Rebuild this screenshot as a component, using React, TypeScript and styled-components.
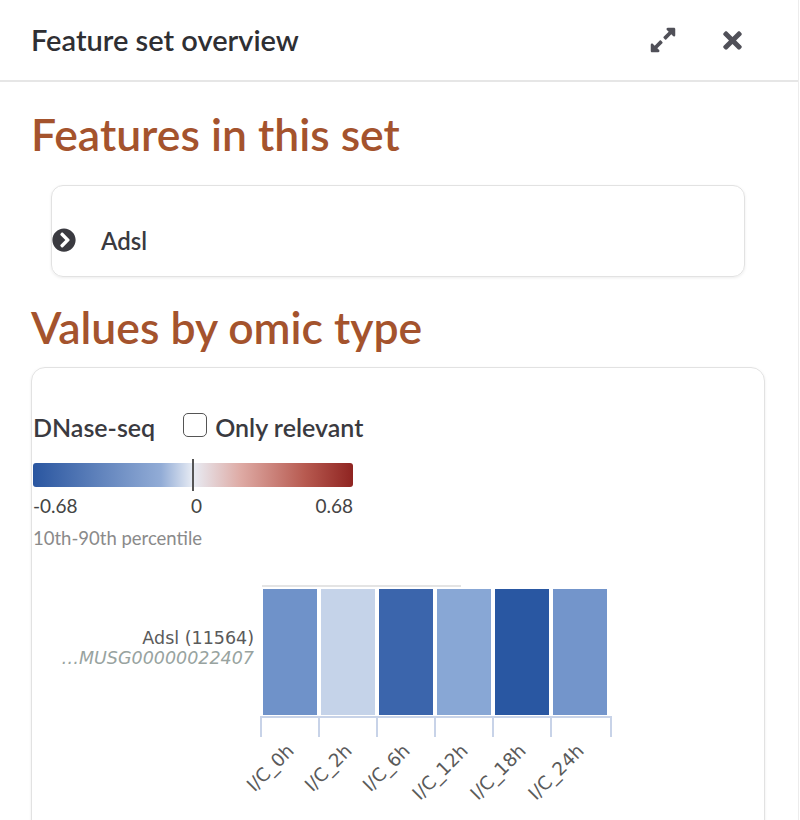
import React from 'react';
import styled, { createGlobalStyle } from 'styled-components';
import { FaExpandAlt, FaTimes, FaChevronCircleRight } from 'react-icons/fa';

const GlobalStyle = createGlobalStyle`
  body {
    margin: 0;
    background: #fff;
    font-family: Lato, "Open Sans", sans-serif;
    color: #3a3a40;
  }
`;

const chartFont = '"DejaVu Sans", Verdana, sans-serif';

const conditions = [
    { label: 'I/C_0h', color: '#6f92c9' },
    { label: 'I/C_2h', color: '#c5d3e9' },
    { label: 'I/C_6h', color: '#3b65ac' },
    { label: 'I/C_12h', color: '#88a7d5' },
    { label: 'I/C_18h', color: '#2957a2' },
    { label: 'I/C_24h', color: '#7395cb' },
];

const Panel = styled.div`
  width: 798px;
  height: 820px;
  border-right: 1px solid #ececec;
  overflow: hidden;
`;

const Header = styled.div`
  height: 80px;
  display: flex;
  align-items: center;
  padding-left: 31px;
  padding-right: 52px;
  border-bottom: 2px solid #e6e6e6;
`;

const HeaderTitle = styled.div`
  flex: 1;
  font-size: 29px;
  line-height: 1;
  font-weight: 600;
  color: #2f2f33;
  margin-top: -2px;
`;

const HeaderButton = styled.button`
  border: none;
  background: none;
  padding: 0;
  margin-left: 42px;
  color: #505058;
  display: flex;
  align-items: center;
  cursor: pointer;
`;

const Content = styled.div`
  padding: 26px 33px 0 31px;
`;

const SectionTitle = styled.h2`
  margin: 0;
  font-size: 44.5px;
  font-weight: 600;
  color: #a4532d;
  line-height: 52px;
`;

const FeatureCard = styled.div`
  margin: 25px 20px 24px;
  height: 92px;
  border: 1px solid #e2e2e2;
  border-radius: 12px;
  box-shadow: 0 1px 3px rgba(0, 0, 0, 0.08);
  display: flex;
  align-items: center;
  padding-top: 18px;
  box-sizing: border-box;
`;

const FeatureRow = styled.div`
  display: flex;
  align-items: center;
  gap: 25px;
  font-size: 24px;
  font-weight: 600;
  color: #3a3a40;
  svg {
    color: #3a3a40;
  }
`;

const OmicCard = styled.div`
  margin-top: 14px;
  height: 480px;
  border: 1px solid #e2e2e2;
  border-radius: 14px;
  box-shadow: 0 1px 3px rgba(0, 0, 0, 0.08);
  padding: 44px 0 0 1px;
`;

const OmicHeader = styled.div`
  display: flex;
  align-items: center;
  gap: 28px;
  font-size: 25px;
  line-height: 30px;
  font-weight: 600;
  color: #3a3a40;
`;

const CheckLabel = styled.label`
  display: flex;
  align-items: center;
  gap: 8px;
`;

const CheckBox = styled.span`
  width: 22px;
  height: 22px;
  border: 1.5px solid #555;
  border-radius: 5px;
  margin-top: -5px;
`;

const Legend = styled.div`
  width: 320px;
  margin-top: 21px;
`;

const LegendBar = styled.div`
  position: relative;
  height: 24px;
  border-radius: 3px;
  background: linear-gradient(to right, #2a56a0, #92acd6 40%, #e8ecf4 50%, #deaaa4 65%, #b75a50 85%, #8f2421);
  &::after {
    content: '';
    position: absolute;
    left: 159px;
    top: -4px;
    width: 1.5px;
    height: 32px;
    background: #555;
  }
`;

const LegendTicks = styled.div`
  display: flex;
  justify-content: space-between;
  margin-top: 8px;
  font-size: 19px;
  line-height: 22px;
  color: #444;
`;

const LegendNote = styled.div`
  margin-top: 10px;
  font-size: 18.5px;
  line-height: 22px;
  color: #8a8a8a;
`;

const HeatmapWrap = styled.div`
  margin-top: 23px;
`;

const Heatmap = () => {
    const x0 = 230;
    const cellW = 54;
    const gap = 4;
    const top = 17;
    const h = 126;
    const step = cellW + gap;
    return (
        <svg width="640" height="240" viewBox="0 0 640 240" style={{ display: 'block' }}>
            <line x1={229} y1={14} x2={428} y2={14} stroke="#e4e4e4" strokeWidth={2} />
            {conditions.map((c, i) => (
                <rect key={c.label} x={x0 + i * step} y={top} width={cellW} height={h} fill={c.color} />
            ))}
            <text x={221} y={72} textAnchor="end" fontSize={17.5} fill="#5a5a5a" fontFamily={chartFont}>
                Adsl (11564)
            </text>
            <text x={221} y={92} textAnchor="end" fontSize={17.5} fill="#98a3a0" fontStyle="italic" fontFamily={chartFont}>
                …MUSG00000022407
            </text>
            <path
                d={`M${x0 - 2} ${top + h + 22} V${top + h + 2} H${x0 + 6 * step} V${top + h + 22}`}
                fill="none"
                stroke="#c8d3e8"
                strokeWidth={2}
            />
            {conditions.slice(1).map((c, i) => (
                <line key={c.label} x1={x0 + (i + 1) * step - 2} y1={top + h + 2} x2={x0 + (i + 1) * step - 2} y2={top + h + 22} stroke="#c8d3e8" strokeWidth={2} />
            ))}
            {conditions.map((c, i) => {
                const cx = x0 + i * step + cellW / 2 + 5;
                const cy = top + h + 37;
                return (
                    <text
                        key={c.label}
                        x={cx}
                        y={cy}
                        textAnchor="end"
                        fontSize={18.5}
                        fill="#5a5a5a"
                        fontFamily={chartFont}
                        transform={`rotate(-45 ${cx} ${cy})`}
                    >
                        {c.label}
                    </text>
                );
            })}
        </svg>
    );
};

const App = () => {
    return (
        <>
            <GlobalStyle />
            <Panel>
                <Header>
                    <HeaderTitle>Feature set overview</HeaderTitle>
                    <HeaderButton aria-label="expand"><FaExpandAlt size={28} /></HeaderButton>
                    <HeaderButton aria-label="close"><FaTimes size={27} /></HeaderButton>
                </Header>
                <Content>
                    <SectionTitle>Features in this set</SectionTitle>
                    <FeatureCard>
                        <FeatureRow>
                            <FaChevronCircleRight size={24} />
                            <span>Adsl</span>
                        </FeatureRow>
                    </FeatureCard>
                    <SectionTitle>Values by omic type</SectionTitle>
                    <OmicCard>
                        <OmicHeader>
                            <span>DNase-seq</span>
                            <CheckLabel>
                                <CheckBox />
                                <span>Only relevant</span>
                            </CheckLabel>
                        </OmicHeader>
                        <Legend>
                            <LegendBar />
                            <LegendTicks>
                                <span>-0.68</span>
                                <span>0</span>
                                <span>0.68</span>
                            </LegendTicks>
                            <LegendNote>10th-90th percentile</LegendNote>
                        </Legend>
                        <HeatmapWrap>
                            <Heatmap />
                        </HeatmapWrap>
                    </OmicCard>
                </Content>
            </Panel>
        </>
    );
};

export default App;
